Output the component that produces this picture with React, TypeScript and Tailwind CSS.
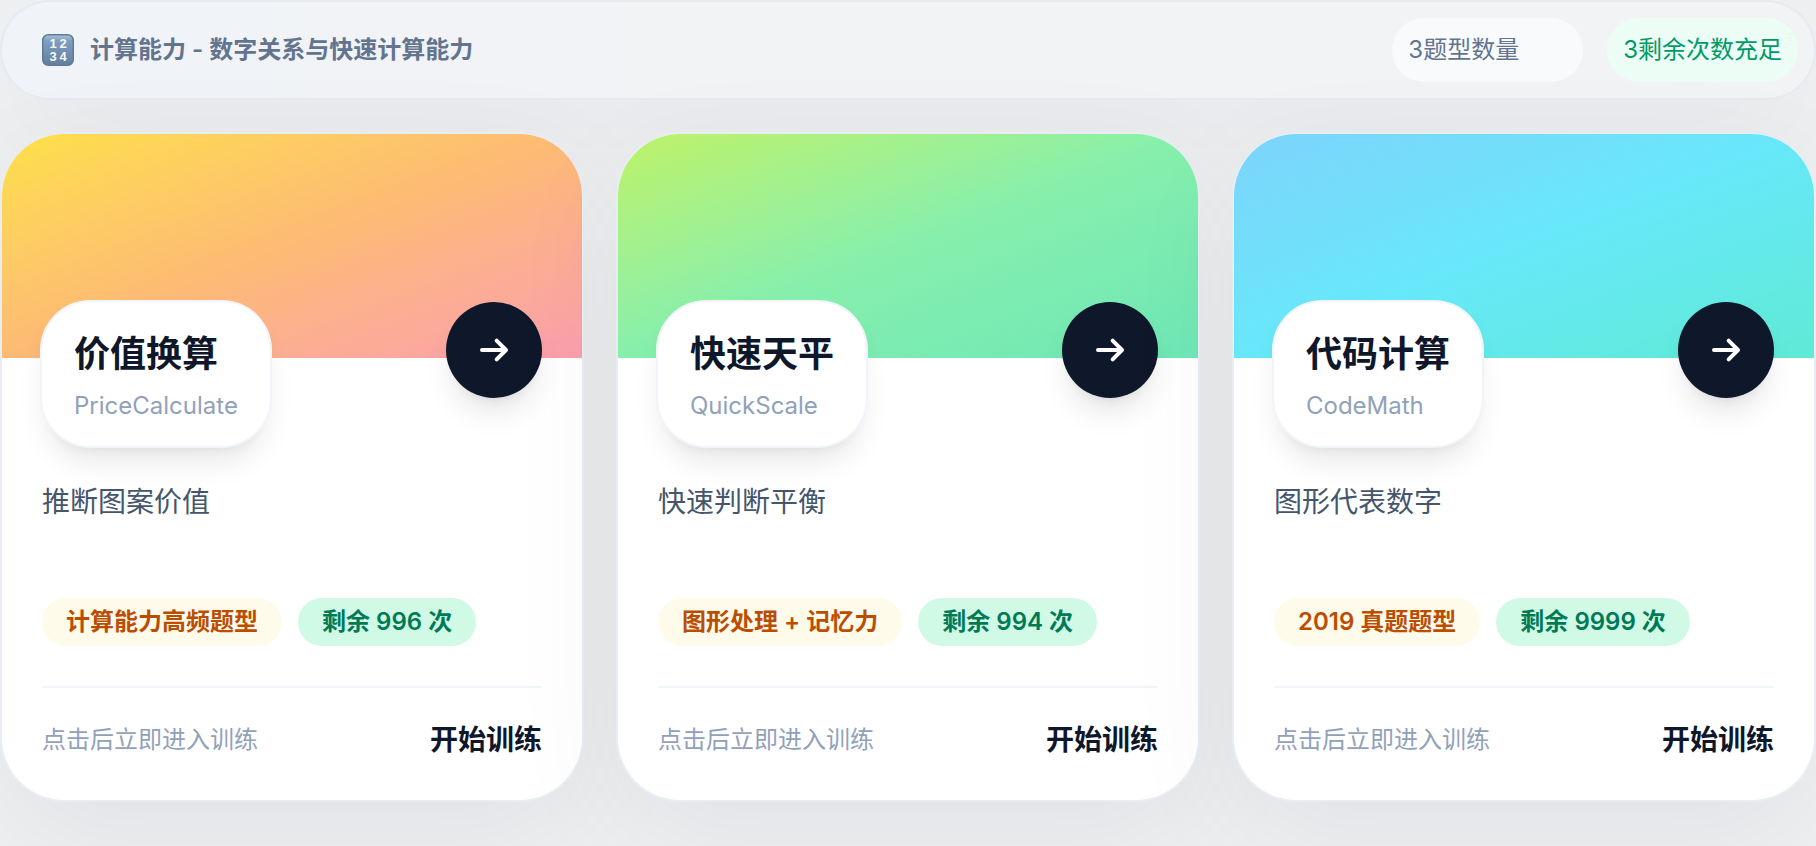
const stats = [
  { value: 3, label: "题型数量", tone: "bg-slate-50 text-slate-500" },
  { value: 3, label: "剩余次数充足", tone: "bg-emerald-50 text-emerald-600" },
];

const games = [
  {
    name: "价值换算",
    code: "PriceCalculate",
    description: "推断图案价值",
    tag: "计算能力高频题型",
    remaining: 996,
    cover: "from-[#fde047] via-[#fdba74] to-[#fb9fae]",
  },
  {
    name: "快速天平",
    code: "QuickScale",
    description: "快速判断平衡",
    tag: "图形处理 + 记忆力",
    remaining: 994,
    cover: "from-[#bef264] via-[#86efac] to-[#6ee7b7]",
  },
  {
    name: "代码计算",
    code: "CodeMath",
    description: "图形代表数字",
    tag: "2019 真题题型",
    remaining: 9999,
    cover: "from-[#7dd3fc] via-[#67e8f9] to-[#5eead4]",
  },
];

function NumbersIcon() {
  return (
    <svg className="size-8" viewBox="0 0 32 32" aria-hidden="true">
      <defs>
        <linearGradient id="numbers" x1="0" y1="0" x2="0" y2="1">
          <stop offset="0" stopColor="#a9c4d8" />
          <stop offset="0.2" stopColor="#7f9fc0" />
          <stop offset="1" stopColor="#647e9b" />
        </linearGradient>
      </defs>
      <rect x="0.75" y="0.75" width="30.5" height="30.5" rx="5.5" fill="url(#numbers)" stroke="#5f7c97" strokeWidth="1.5" />
      <g fill="#f4f8fc" fontFamily="Liberation Sans, sans-serif" fontSize="13" fontWeight="700" textAnchor="middle">
        <text x="11" y="14">1</text>
        <text x="21" y="14">2</text>
        <text x="11" y="27">3</text>
        <text x="21" y="27">4</text>
      </g>
    </svg>
  );
}

function ArrowIcon() {
  return (
    <svg className="size-8" viewBox="0 0 24 24" fill="none" stroke="currentColor" strokeWidth="3" strokeLinecap="round" strokeLinejoin="round" aria-hidden="true">
      <path d="M14 5l7 7m0 0l-7 7m7-7H3" />
    </svg>
  );
}

function GameCard({ game }: { game: (typeof games)[number] }) {
  return (
    <article className="overflow-hidden rounded-[64px] border-2 border-slate-200/80 bg-white shadow-[0_36px_120px_rgba(15,23,42,0.06)]">
      <div className={`h-56 bg-linear-to-br ${game.cover}`} />
      <div className="px-10 pb-10">
        <div className="-mt-14 flex items-start justify-between">
          <div className="rounded-[48px] bg-white px-8 py-6 shadow-[0_20px_30px_-6px_rgba(0,0,0,0.1),0_8px_12px_-8px_rgba(0,0,0,0.1)] ring-2 ring-slate-100">
            <h2 className="text-4xl leading-14 font-bold text-slate-900">{game.name}</h2>
            <p className="mt-2 text-2xl leading-8 text-slate-400">{game.code}</p>
          </div>
          <button
            type="button"
            aria-label={`进入${game.name}`}
            className="flex size-24 items-center justify-center rounded-full bg-slate-900 text-white shadow-[0_20px_30px_-6px_rgba(0,0,0,0.1),0_8px_12px_-8px_rgba(0,0,0,0.1)]"
          >
            <ArrowIcon />
          </button>
        </div>
        <p className="mt-8 min-h-24 text-[28px] leading-12 text-slate-600">{game.description}</p>
        <div className="mt-6 flex flex-wrap gap-4 text-2xl leading-8 font-semibold">
          <span className="rounded-full bg-amber-50 px-6 py-2 text-amber-700">{game.tag}</span>
          <span className="rounded-full bg-emerald-100 px-6 py-2 text-emerald-700">剩余 {game.remaining} 次</span>
        </div>
        <div className="mt-10 flex items-center justify-between border-t-2 border-slate-100 pt-8">
          <span className="text-2xl leading-8 text-slate-400">点击后立即进入训练</span>
          <button type="button" className="text-[28px] leading-10 font-bold text-slate-900">
            开始训练
          </button>
        </div>
      </div>
    </article>
  );
}

export default function App() {
  return (
    <main className="min-h-screen bg-[#eff0f2] pb-10 font-['Inter','Noto_Sans_CJK_SC',sans-serif]">
      <header className="flex items-center justify-between rounded-full border-2 border-slate-200/80 bg-linear-to-r from-[#f0f3f8] to-[#f2f3f5] to-40% p-4 pl-10 shadow-[0_36px_120px_rgba(15,23,42,0.04)]">
        <div className="flex items-center gap-4">
          <NumbersIcon />
          <h1 className="text-2xl leading-8 font-semibold text-slate-500">计算能力 - 数字关系与快速计算能力</h1>
        </div>
        <div className="grid grid-cols-2 gap-6 text-2xl leading-8">
          {stats.map((stat) => (
            <div key={stat.label} className={`rounded-full p-4 ${stat.tone}`}>
              {stat.value}
              {stat.label}
            </div>
          ))}
        </div>
      </header>
      <section className="mt-8 grid grid-cols-3 gap-8">
        {games.map((game) => (
          <GameCard key={game.code} game={game} />
        ))}
      </section>
    </main>
  );
}
